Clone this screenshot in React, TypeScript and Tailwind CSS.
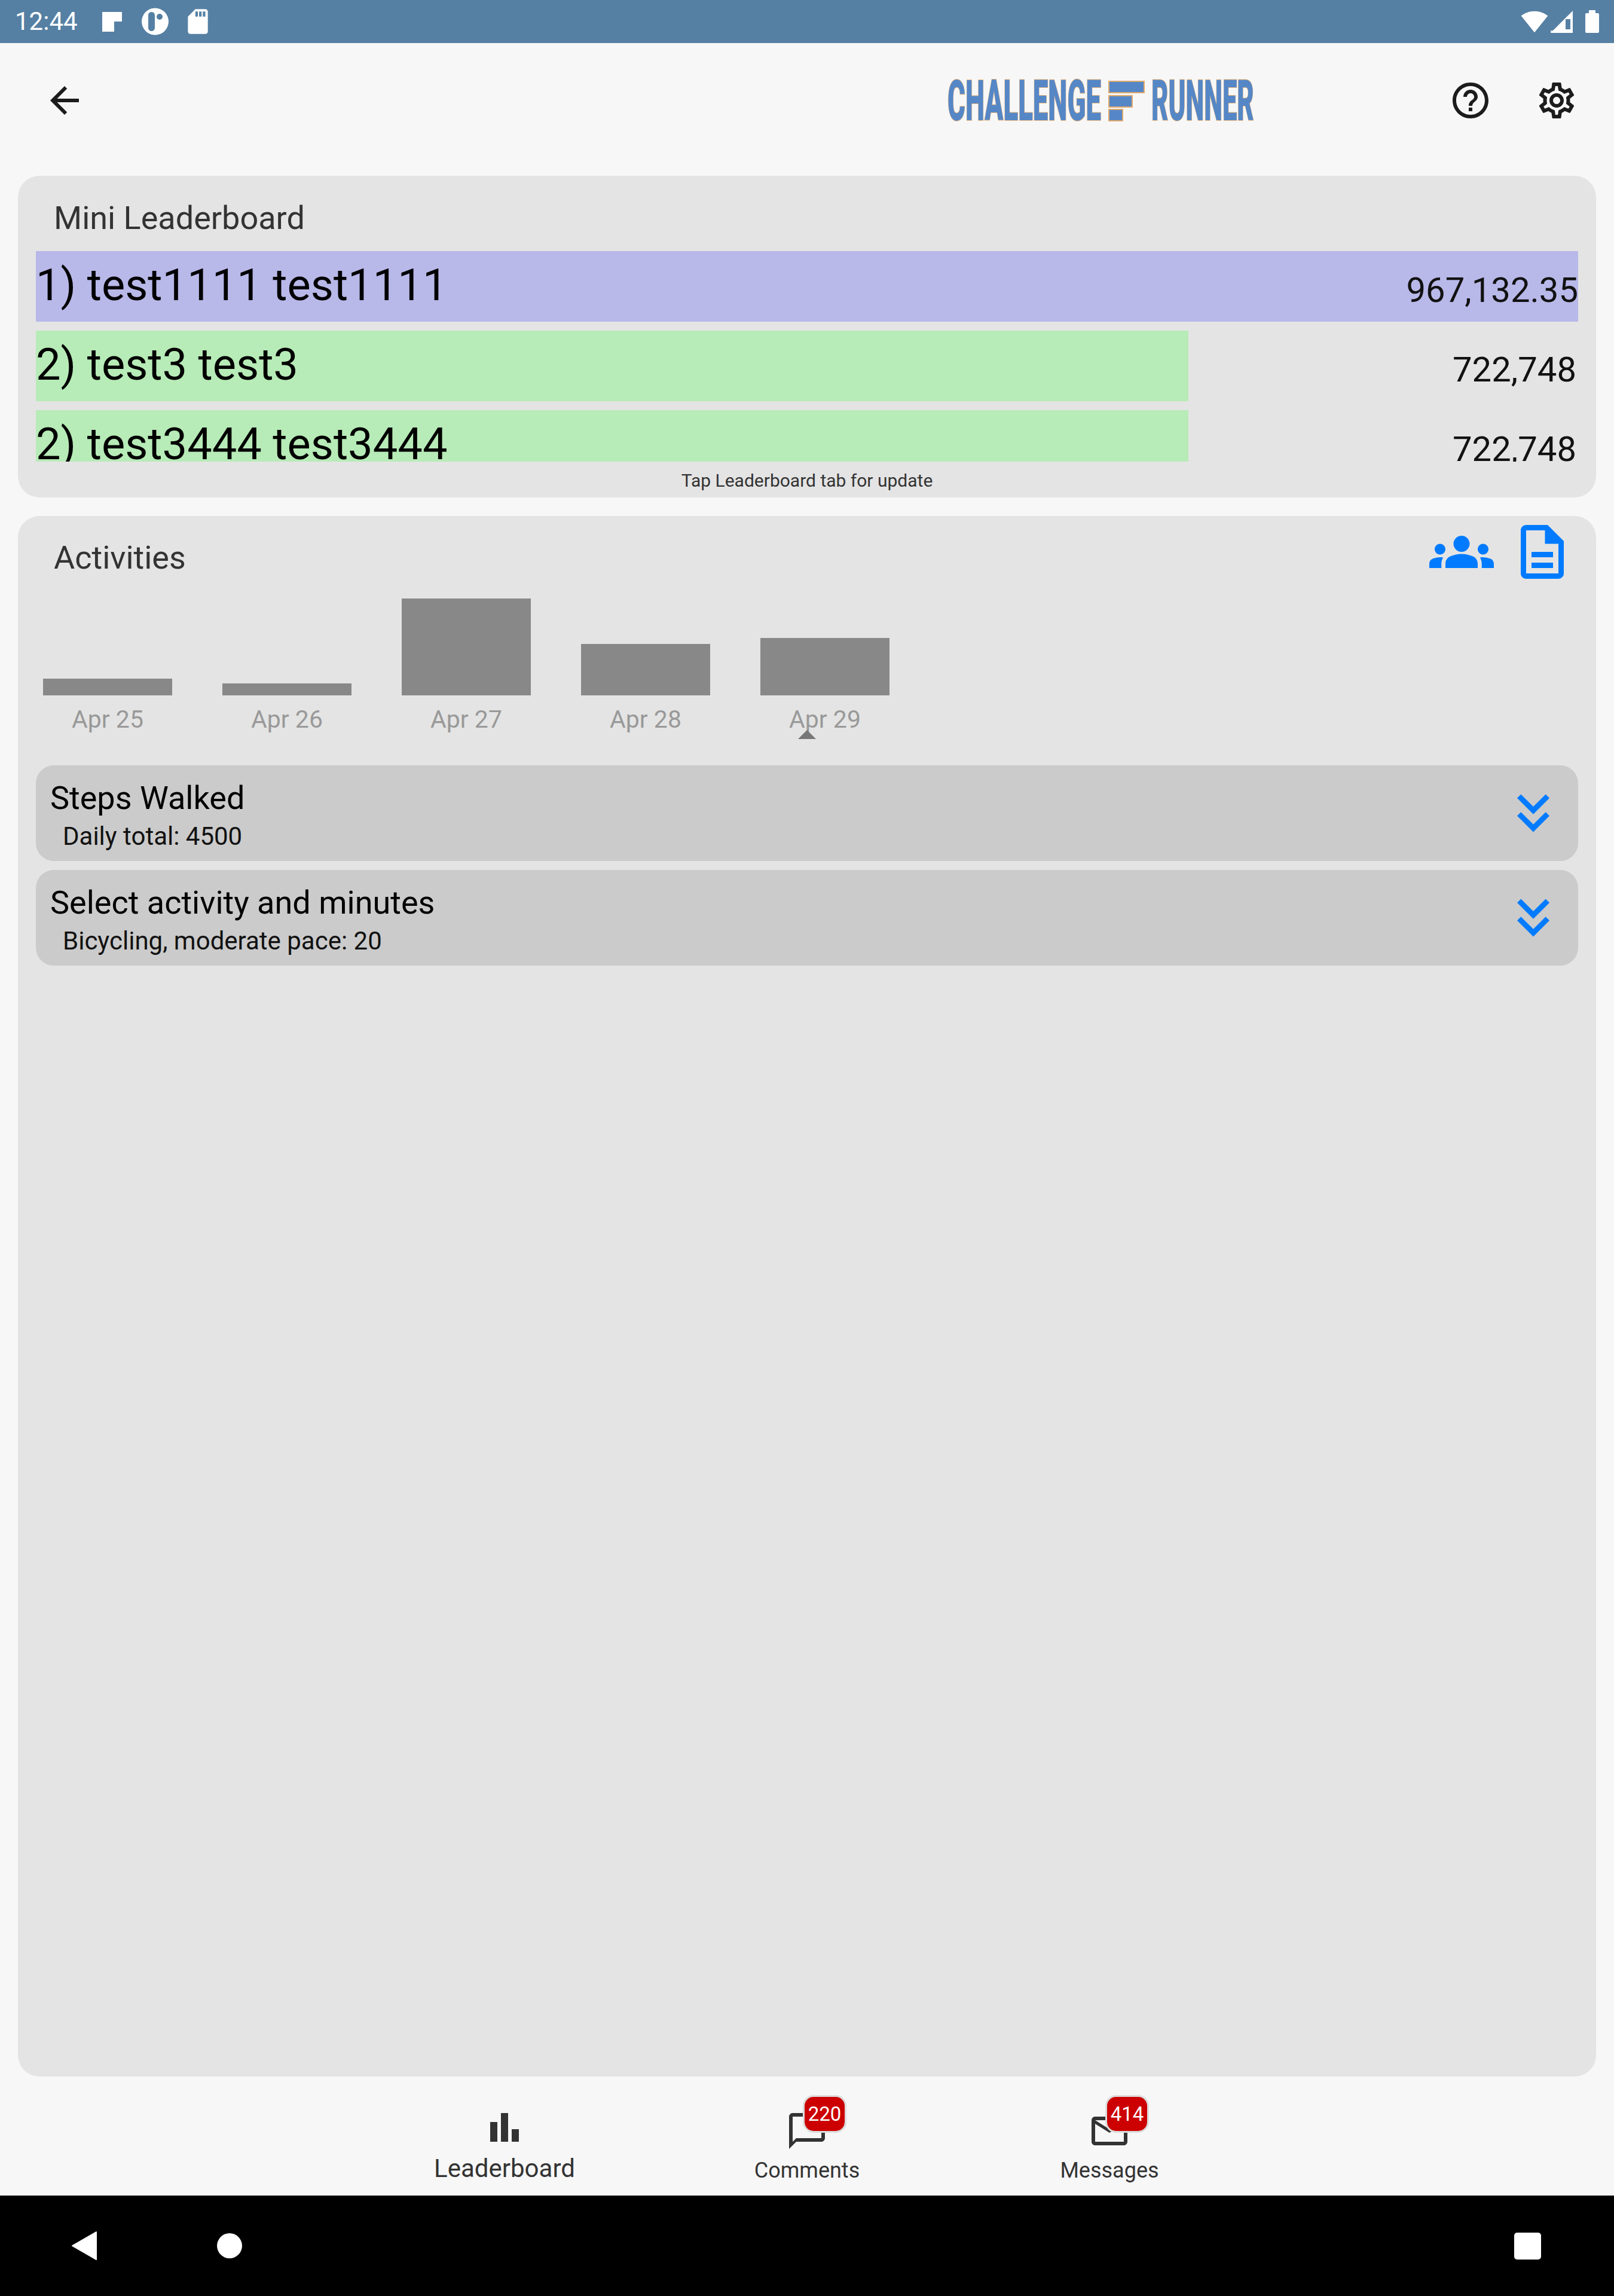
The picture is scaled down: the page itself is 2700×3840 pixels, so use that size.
import React from 'react';
import {
  MdArrowBack,
  MdBarChart,
  MdChatBubbleOutline,
  MdGroups,
  MdHelpOutline,
  MdKeyboardDoubleArrowDown,
  MdMailOutline,
  MdOutlineDescription,
  MdOutlineSettings,
  MdSdCard,
  MdSignalWifi4Bar,
} from 'react-icons/md';

const leaders = [
  { name: '1) test1111 test1111', value: '967,132.35', width: 2580, color: '#b8b8e9', right: 'pr-0' },
  { name: '2) test3 test3', value: '722,748', width: 1928, color: '#b7ebb7', right: 'pr-[3px]' },
  { name: '2) test3444 test3444', value: '722,748', width: 1928, color: '#b7ebb7', right: 'pr-[3px]' },
];

const days = [
  { label: 'Apr 25', height: 28 },
  { label: 'Apr 26', height: 20 },
  { label: 'Apr 27', height: 162 },
  { label: 'Apr 28', height: 86 },
  { label: 'Apr 29', height: 96 },
];

const entries = [
  { title: 'Steps Walked', detail: 'Daily total: 4500' },
  { title: 'Select activity and minutes', detail: 'Bicycling, moderate pace: 20' },
];

function StatusBar() {
  return (
    <div className="flex h-[72px] w-full shrink-0 items-center bg-[#5580a3] pl-[25px] pr-[25px] text-white">
      <span className="w-[105px] text-[42px] leading-none">12:44</span>
      <svg className="ml-[41px]" width="33" height="33" viewBox="0 0 33 33">
        <path d="M0 0H33V16H20V33H0Z" fill="#fff" />
      </svg>
      <svg className="ml-[33px]" width="45" height="46" viewBox="0 0 45 46">
        <circle cx="22.5" cy="23" r="22.5" fill="#fff" />
        <rect x="11" y="7" width="11" height="32" rx="5.5" fill="#5580a3" />
        <circle cx="30" cy="15" r="5" fill="#5580a3" />
      </svg>
      <MdSdCard className="ml-[24px]" size={50} />
      <div className="ml-auto flex items-center">
        <MdSignalWifi4Bar size={46} />
        <svg className="ml-[4px]" width="37" height="37" viewBox="0 0 37 37">
          <path d="M0 37L37 0V37Z" fill="#fff" />
          <rect x="25" y="14" width="8" height="17" fill="#5580a3" />
          <rect x="0" y="33" width="37" height="4" fill="#fff" opacity=".75" />
        </svg>
        <svg className="ml-[21px]" width="23" height="38" viewBox="0 0 23 38">
          <path d="M6 0H17V5H21A2 2 0 0 1 23 7V36A2 2 0 0 1 21 38H2A2 2 0 0 1 0 36V7A2 2 0 0 1 2 5H6Z" fill="#fff" />
        </svg>
      </div>
    </div>
  );
}

function Logo() {
  const word = 'block whitespace-nowrap origin-left text-[95px] font-black leading-[70px] text-[#5587c7] [-webkit-text-stroke:2px_#e8b67c] [paint-order:stroke_fill]';
  return (
    <div className="flex h-[70px] items-center pt-[2px]">
      <div className="w-[269px]">
        <span className={`${word} scale-x-[.48]`}>CHALLENGE</span>
      </div>
      <svg width="61" height="68" viewBox="0 0 61 68">
        <g fill="#5587c7" stroke="#e0aa6c" strokeWidth="2">
          <rect x="1" y="1" width="59" height="19" />
          <rect x="1" y="25" width="39" height="19" />
          <rect x="1" y="48" width="23" height="19" />
        </g>
      </svg>
      <div className="ml-[11px] w-[173px]">
        <span className={`${word} scale-x-[.46]`}>RUNNER</span>
      </div>
    </div>
  );
}

function Toolbar() {
  return (
    <div className="flex h-[192px] shrink-0 items-center pl-[72px] text-[#1c1c1c]">
      <MdArrowBack size={72} />
      <div className="ml-[1441px]">
        <Logo />
      </div>
      <MdHelpOutline className="ml-[325px]" size={72} />
      <MdOutlineSettings className="ml-[72px]" size={72} />
    </div>
  );
}

function MiniLeaderboard() {
  return (
    <div className="mx-[30px] mt-[30px] flex h-[538px] shrink-0 flex-col rounded-[36px] bg-[#e4e4e4]">
      <div className="flex h-[126px] items-center pl-[60px] pt-[15px] text-[54px] leading-none text-[#333]">Mini Leaderboard</div>
      <div className="mx-[30px] flex h-[352px] flex-col gap-[15px] overflow-hidden">
        {leaders.map((row) => (
          <div key={row.name} className="relative flex h-[118px] shrink-0 items-center justify-between">
            <div className="absolute inset-y-0 left-0" style={{ width: row.width, backgroundColor: row.color }} />
            <span className="relative pb-[4px] text-[74px] leading-none text-black">{row.name}</span>
            <span className={`relative pt-[11px] text-[58px] leading-none text-[#111] ${row.right}`}>{row.value}</span>
          </div>
        ))}
      </div>
      <div className="flex flex-1 items-center justify-center pt-[4px] text-[30px] leading-none text-[#333]">Tap Leaderboard tab for update</div>
    </div>
  );
}

function Activities() {
  return (
    <div className="mx-[30px] mt-[31px] flex flex-1 flex-col rounded-[36px] bg-[#e4e4e4]">
      <div className="flex h-[138px] items-start justify-between">
        <span className="pl-[60px] pt-[43px] text-[54px] leading-none text-[#333]">Activities</span>
        <div className="flex items-center gap-[27px] pr-[36px] pt-[6px] text-[#007bff]">
          <MdGroups size={108} />
          <MdOutlineDescription size={108} />
        </div>
      </div>
      <div className="relative flex gap-[84px] pl-[42px]">
        {days.map((day) => (
          <div key={day.label} className="flex h-[228px] w-[216px] flex-col items-center">
            <div className="flex h-[162px] w-full shrink-0 items-end">
              <div className="w-full bg-[#888888]" style={{ height: day.height }} />
            </div>
            <span className="pt-[20px] text-[41px] leading-none text-[#999]">{day.label}</span>
          </div>
        ))}
        <div className="absolute left-[1305px] top-[220px] h-0 w-0 border-x-[15px] border-b-[15px] border-x-transparent border-b-[#777]" />
      </div>
      <div className="mx-[30px] mt-[51px] flex flex-col gap-[15px]">
        {entries.map((entry) => (
          <div key={entry.title} className="flex h-[160px] items-center justify-between rounded-[30px] bg-[#cbcbcb] pl-[24px] pr-[21px]">
            <div className="flex flex-col pt-[8px]">
              <span className="text-[54px] leading-[60px] text-black">{entry.title}</span>
              <span className="pl-[21px] pt-[9px] text-[42px] leading-[50px] text-[#111]">{entry.detail}</span>
            </div>
            <MdKeyboardDoubleArrowDown className="text-[#007bff]" size={108} />
          </div>
        ))}
      </div>
    </div>
  );
}

function Badge({ count, left }: { count: number; left: string }) {
  return (
    <span className={`absolute top-[-21px] ${left} flex h-[57px] w-[67px] items-center justify-center rounded-[15px] bg-[#cc0000] text-[33px] leading-none text-white shadow-[0_0_0_3px_#dcdcdc]`}>
      {count}
    </span>
  );
}

function BottomTabs() {
  return (
    <div className="flex h-[199px] shrink-0 items-start justify-center text-[#333]">
      <div className="flex w-[506px] flex-col items-center pt-[49px]">
        <MdBarChart size={72} />
        <span className="mt-[12px] text-[42px] leading-none">Leaderboard</span>
      </div>
      <div className="flex w-[506px] flex-col items-center pt-[55px]">
        <div className="relative">
          <MdChatBubbleOutline size={72} />
          <Badge count={220} left="left-[32px]" />
        </div>
        <span className="mt-[12px] text-[36px] leading-none">Comments</span>
      </div>
      <div className="flex w-[506px] flex-col items-center pt-[55px]">
        <div className="relative">
          <MdMailOutline size={72} />
          <Badge count={414} left="left-[32px]" />
        </div>
        <span className="mt-[12px] text-[36px] leading-none">Messages</span>
      </div>
    </div>
  );
}

function NavBar() {
  return (
    <div className="flex h-[168px] shrink-0 items-center bg-black pl-[120px]">
      <svg width="42" height="48" viewBox="0 0 42 48">
        <path d="M41 1V47L1 24Z" fill="#fff" stroke="#fff" strokeWidth="2" strokeLinejoin="round" />
      </svg>
      <div className="ml-[201px] h-[42px] w-[42px] rounded-full bg-white" />
      <div className="ml-[2128px] h-[45px] w-[45px] rounded-[5px] bg-white" />
    </div>
  );
}

export default function App() {
  return (
    <div className="flex h-[3840px] w-[2700px] flex-col overflow-hidden bg-[#f7f7f7] font-['Roboto',sans-serif]">
      <StatusBar />
      <Toolbar />
      <MiniLeaderboard />
      <Activities />
      <BottomTabs />
      <NavBar />
    </div>
  );
}
